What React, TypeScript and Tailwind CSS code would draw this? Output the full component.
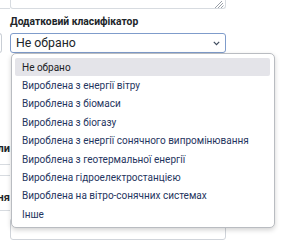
const OPTIONS = [
  "Не обрано",
  "Вироблена з енергії вітру",
  "Вироблена з біомаси",
  "Вироблена з біогазу",
  "Вироблена з енергії сонячного випромінювання",
  "Вироблена з геотермальної енергії",
  "Вироблена гідроелектростанцією",
  "Вироблена на вітро-сонячних системах",
  "Інше",
];

function Chevron() {
  return (
    <svg width="7" height="5" viewBox="0 0 7 5" fill="none" className="text-[#3d4a5c]">
      <path d="M0.8 0.9 L3.5 3.6 L6.2 0.9" stroke="currentColor" strokeWidth="1.2" />
    </svg>
  );
}

function Grip() {
  return (
    <svg width="11" height="8" viewBox="0 0 11 8" className="text-[#9aa0a8]">
      <path d="M2 8 L9 1 M5 8 L10 3 M8 8 L10.5 5.5" stroke="currentColor" strokeWidth="1" />
    </svg>
  );
}

export default function App() {
  return (
    <div className="relative h-[240px] w-[288px] overflow-hidden bg-white font-['Roboto',sans-serif] text-[12px] text-[#212529]">
      <div className="flex">
        {/* left column, mostly cut off */}
        <div className="flex w-[10px] flex-col items-end">
          <div className="h-[9px] w-[10px] border-b border-[#d7dbe0]" />
          <div className="h-[24px]" />
          <div className="mr-[8px] h-[20px] w-[10px] rounded-r-[3px] border border-l-0 border-[#c9ced5]" />
          <div className="h-[88px]" />
          <div className="text-[11px] leading-[16px] font-bold whitespace-nowrap">Назва ли</div>
          <div className="mt-[7px] h-[12px] w-[10px] border-y border-[#d7dbe0]" />
          <div className="h-[14px]" />
          <div className="text-[11px] leading-[16px] font-bold whitespace-nowrap">Назва ня</div>
          <div className="mt-[4px] h-[30px] w-[10px] border-t border-[#d7dbe0]" />
        </div>

        {/* right column */}
        <div className="flex w-[216px] flex-col">
          <div className="relative h-[9px] rounded-b-[3px] border-x border-b border-[#d7dbe0]">
            <div className="absolute right-[1px] bottom-0">
              <Grip />
            </div>
          </div>
          <div className="pt-[5px] pb-[3px] text-[10.3px] leading-[16px] font-bold text-[#212529]">
            Додатковий класифікатор
          </div>
          <div className="flex h-[20px] items-center justify-between rounded-[3px] border border-[#7f9ccb] pr-[5px] pl-[5px]">
            <span className="text-[12.3px] leading-[16px] text-[#212529]">Не обрано</span>
            <Chevron />
          </div>
          <div className="h-[165px]" />
          <div className="h-[22px] rounded-[3px] border border-[#d0d4da]" />
        </div>
      </div>

      {/* open dropdown list */}
      <div className="absolute top-[53px] left-[11px] w-[264px] rounded-[5px] border border-[#b9bcc1] bg-white pt-[4px] pr-[4px] pb-[3px] pl-[3px] shadow-[0_2px_5px_rgba(0,0,0,0.18)]">
        {OPTIONS.map((option, index) => (
          <div
            key={option}
            className={`flex h-[18.4px] items-center rounded-[2px] pl-[7px] text-[10px] whitespace-nowrap ${
              index === 0 ? "bg-[#e4e4e9] text-[#202124]" : "text-[#1f3560]"
            }`}
          >
            {option}
          </div>
        ))}
      </div>
    </div>
  );
}
